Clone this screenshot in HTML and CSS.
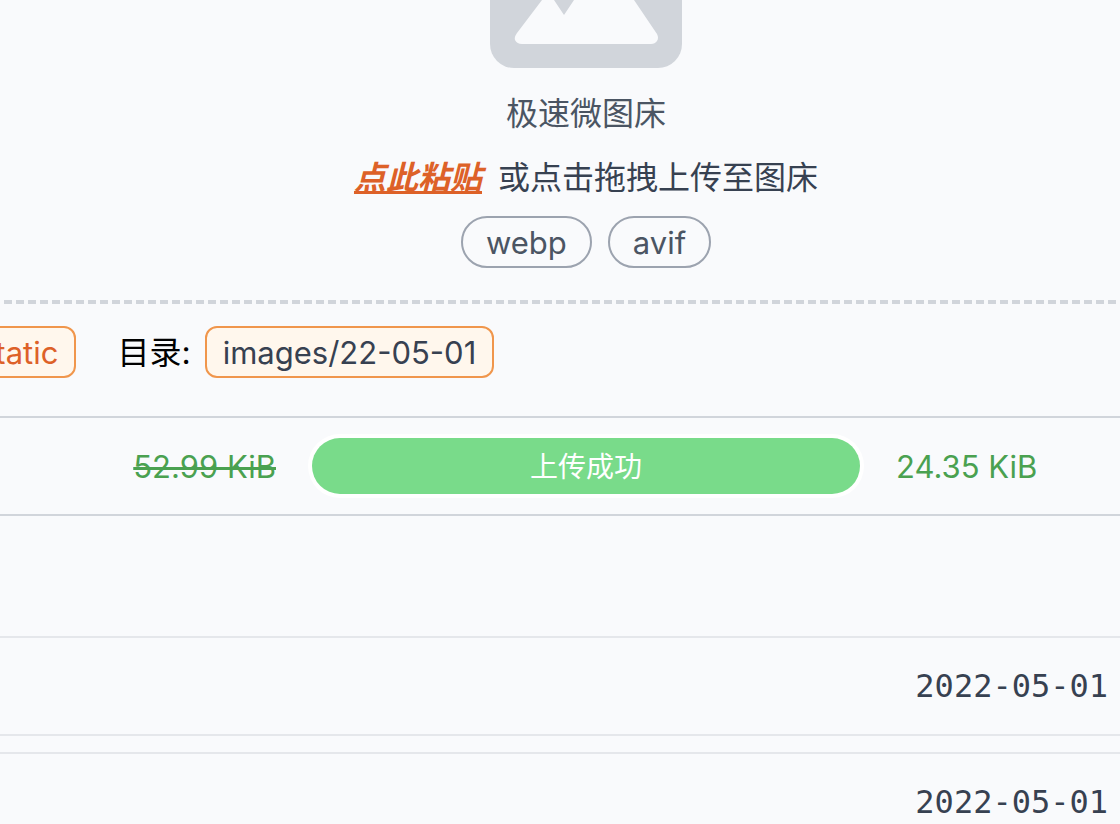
FILE: index.html
```html
<!DOCTYPE html>
<html lang="zh-CN">
<head>
<meta charset="utf-8">
<title>极速微图床</title>
<link rel="stylesheet" href="styles.css">
</head>
<body>
<main class="page">
  <section class="drop">
    <svg class="drop-icon" viewBox="0 0 192 68" aria-hidden="true">
      <path fill="#d1d5db" d="M0 0H192V44A24 24 0 0 1 168 68H24A24 24 0 0 1 0 44Z"/>
      <path fill="#f9fafc" d="M52 0H64L74 15L84 0H144L167 34Q169 38 167 41Q165 44 161 44H32Q27 44 25 40Q24 37 27 33Z"/>
    </svg>
    <h1 class="title">极速微图床</h1>
    <p class="hint"><button class="paste" type="button">点此粘贴</button><span>或点击拖拽上传至图床</span></p>
    <div class="formats">
      <button class="pill" type="button">webp</button>
      <button class="pill" type="button">avif</button>
    </div>
  </section>
  <div class="settings">
    <button class="tag tag-accent" type="button">static</button>
    <div class="field"><span>目录:</span><button class="tag" type="button">images/22-05-01</button></div>
  </div>
  <section class="upload">
    <del class="size before">52.99 KiB</del>
    <div class="progress">上传成功</div>
    <span class="size">24.35 KiB</span>
  </section>
  <section class="history">
    <div class="entry"><time datetime="2022-05-01">2022-05-01</time></div>
    <div class="entry"><time datetime="2022-05-01">2022-05-01</time></div>
  </section>
</main>
</body>
</html>
```
FILE: styles.css
```css
* { box-sizing: border-box; }
html { height: 100%; overflow: hidden; }
body {
  margin: 0;
  height: 100%;
  overflow: hidden;
  background: #f9fafc;
  color: #374151;
  font: 32px/48px Inter, "Noto Sans CJK SC", sans-serif;
}
button {
  margin: 0;
  padding: 0;
  border: 0;
  background: none;
  color: inherit;
  font: inherit;
  cursor: pointer;
}
.drop {
  display: flex;
  flex-direction: column;
  align-items: center;
  margin: 0 -8px;
  padding: 0 8px 32px 60px;
  border-bottom: 4px dashed #d1d5db;
}
.drop-icon { display: block; width: 192px; height: 68px; }
.title {
  margin: 22px 0 16px;
  color: #4b5563;
  font-size: 32px;
  font-weight: 400;
}
.hint { display: flex; gap: 16px; margin: 0 0 14px; }
.paste {
  color: #dd6128;
  font-style: italic;
  font-weight: 700;
  text-decoration: underline;
  text-decoration-thickness: 3px;
  text-underline-offset: 2px;
}
.formats { display: flex; gap: 16px; }
.pill {
  padding: 1px 23px 0;
  border: 2px solid #9ca3af;
  border-radius: 26px;
  color: #4b5563;
  font-size: 31px;
  line-height: 47px;
}
.settings {
  display: flex;
  gap: 41px;
  margin-left: -39px;
  padding: 22px 0 38px;
}
.field { display: flex; align-items: center; gap: 14px; color: #000; }
.field span { padding-top: 2px; line-height: 46px; }
.tag {
  padding: 1px 16px 0;
  border: 2px solid #f0964c;
  border-radius: 12px;
  background: #fff7ed;
  color: #374151;
  font-size: 31px;
  line-height: 47px;
}
.tag-accent { color: #dd6128; }
.upload {
  display: grid;
  grid-template-columns: 224px 1fr 224px;
  gap: 36px;
  align-items: center;
  padding: 20px 0 20px 52px;
  border: solid #d1d5db;
  border-width: 2px 0;
}
.size { padding-top: 2px; color: #4aa150; font-size: 31px; }
.before { text-align: right; text-decoration-thickness: 3px; }
.progress {
  padding-top: 2px;
  border-radius: 28px;
  background: #79db8a;
  box-shadow: 0 0 0 4px #fff;
  color: #fff;
  font-size: 28px;
  line-height: 54px;
  text-align: center;
}
.history { display: grid; gap: 16px; padding-top: 120px; }
.entry {
  padding: 24px 12px 24px 0;
  border: solid #e5e7eb;
  border-width: 2px 0;
  font-family: "DejaVu Sans Mono", monospace;
  text-align: right;
}
```
